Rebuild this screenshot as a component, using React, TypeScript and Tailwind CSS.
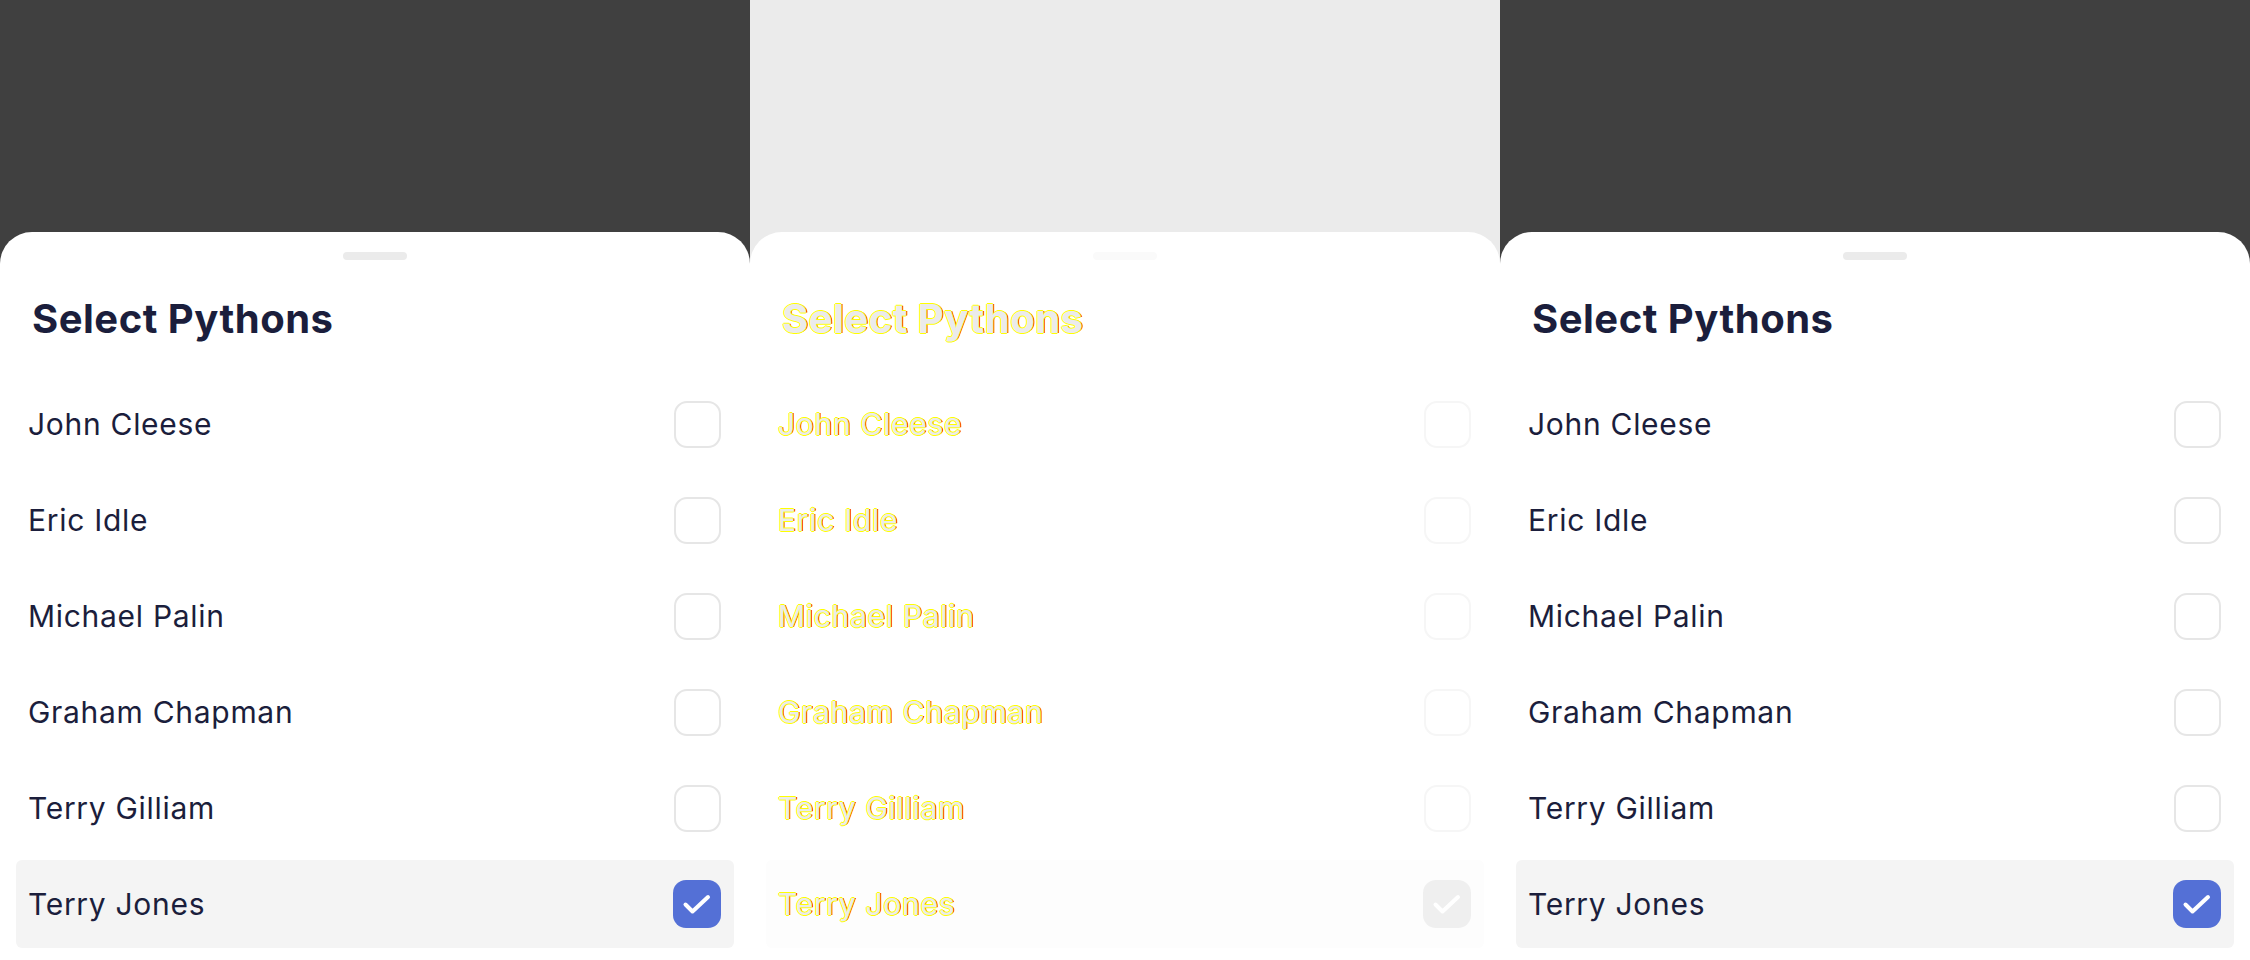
import React from 'react';

const pythons = ['John Cleese', 'Eric Idle', 'Michael Palin', 'Graham Chapman', 'Terry Gilliam', 'Terry Jones'];
const selected = 'Terry Jones';

function Check({ on, ghost }: { on: boolean; ghost: boolean }) {
  if (on) {
    return (
      <div className={ghost ? 'w-[48px] h-[48px] rounded-[13px] bg-[#efefef] flex items-center justify-center' : 'w-[48px] h-[48px] rounded-[13px] bg-[#5470d6] flex items-center justify-center'}>
        <svg width="48" height="48" viewBox="0 0 48 48" fill="none">
          <polyline points="12.5,24.5 19.5,31.5 35,17" stroke="#fff" strokeWidth="4" strokeLinecap="round" strokeLinejoin="round" />
        </svg>
      </div>
    );
  }
  return (
    <div className={ghost ? 'w-[47px] h-[47px] rounded-[13px] border-2 border-[#f6f6f6] bg-white' : 'w-[47px] h-[47px] rounded-[13px] border-2 border-[#e6e6e6] bg-white'} />
  );
}

function Sheet({ ghost }: { ghost: boolean }) {
  const ink = ghost
    ? 'text-[#ebebeb] [text-shadow:-1px_0_#ffff00,0_-1px_#ffff00,0_1px_#ffff00,1px_0_#ff0000,1.5px_0_#ffff00]'
    : 'text-[#1b1e3c]';
  return (
    <div className={ghost ? 'w-[750px] h-[960px] flex flex-col bg-[#ebebeb]' : 'w-[750px] h-[960px] flex flex-col bg-[#404040]'}>
      <div className="mt-[232px] flex-1 bg-white rounded-t-[32px] pt-5 flex flex-col">
        <div className={ghost ? 'mx-auto w-16 h-2 rounded-full bg-[#fafafa]' : 'mx-auto w-16 h-2 rounded-full bg-[#ebebeb]'} />
        <h1 className={`mt-[35px] pl-[32px] text-[40px] leading-[48px] font-bold tracking-[0.5px] ${ink}`}>Select Pythons</h1>
        <div className="mt-[37px] px-4 flex flex-col gap-2">
          {pythons.map((name) => {
            const on = name === selected;
            return (
              <div
                key={name}
                className={
                  on
                    ? ghost
                      ? 'h-[88px] flex items-center justify-between pl-[12px] pr-[13px] rounded-md bg-[#fdfdfd]'
                      : 'h-[88px] flex items-center justify-between pl-[12px] pr-[13px] rounded-md bg-[#f4f4f4]'
                    : 'h-[88px] flex items-center justify-between pl-[12px] pr-[13px] rounded-md'
                }
              >
                <span className={`text-[30px] leading-[36px] tracking-[0.7px] ${ink}`}>{name}</span>
                <Check on={on} ghost={ghost} />
              </div>
            );
          })}
        </div>
      </div>
    </div>
  );
}

export default function App() {
  return (
    <div className="w-[2250px] h-[960px] flex overflow-hidden font-['Inter',sans-serif]">
      <Sheet ghost={false} />
      <Sheet ghost={true} />
      <Sheet ghost={false} />
    </div>
  );
}
